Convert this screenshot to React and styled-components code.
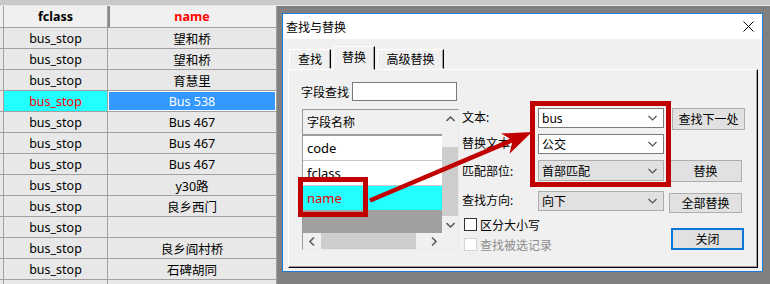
import React from 'react';
import styled, { createGlobalStyle } from 'styled-components';

const GlobalStyle = createGlobalStyle`
  html, body { margin: 0; padding: 0; background: #808080; }
  body {
    font-family: "Noto Sans", "Noto Sans CJK SC", sans-serif;
    font-size: 12px;
    color: #000;
  }
  * { box-sizing: border-box; }
`;

const Screen = styled.div`
  position: relative;
  width: 770px;
  height: 284px;
  overflow: hidden;
  background: #808080;
  display: flex;
  flex-direction: column;
`;

const TopStrip = styled.div`
  flex: none;
  height: 6px;
  background: #c9c9c9;
  border-bottom: 1px solid #e6e6e6;
`;

const Workspace = styled.div`
  flex: 1;
  min-height: 0;
  display: flex;
  align-items: flex-start;
`;

/* attribute table */
const Grid = styled.div`
  flex: none;
  width: 277px;
  display: grid;
  grid-template-columns: 3px 103px 168px;
  grid-template-rows: 21px;
  grid-auto-rows: 20px;
  gap: 1px;
  padding-right: 1px;
  background: #a0a0a0;
  font-size: 12.5px;
`;

const HeadCell = styled.div`
  background: #f0f0f0;
  display: flex;
  align-items: center;
  justify-content: center;
  font-weight: 700;
  color: ${p => (p.$accent ? '#ff0000' : '#000')};
  ${p => p.$pressed && 'box-shadow: inset 2px 0 0 #8a8a8a;'}
`;

const cellBg = { cyan: '#22ffff', blue: '#3399ff' };
const cellFg = { cyan: '#ff0000', blue: '#ffffff' };

const Cell = styled.div`
  background: ${p => cellBg[p.$tone] || '#e8e8e8'};
  color: ${p => cellFg[p.$tone] || '#000'};
  ${p => p.$tone === 'blue' && 'box-shadow: inset 0 0 0 1px #fff;'}
  display: flex;
  align-items: center;
  justify-content: center;
  white-space: nowrap;
`;

/* dialog */
const Dialog = styled.div`
  flex: none;
  margin: 7px 0 0 5px;
  width: 481px;
  height: 259px;
  border: 1px solid #1b7fd6;
  background: #f0f0f0;
  display: flex;
  flex-direction: column;
`;

const TitleBar = styled.div`
  flex: none;
  height: 25px;
  background: #fff;
  display: flex;
  align-items: center;
  justify-content: space-between;
  padding: 0 8px 0 3px;
`;

const Body = styled.div`
  flex: 1;
  display: flex;
  flex-direction: column;
  padding: 7px 4px 3px 5px;
`;

const TabRow = styled.div`
  flex: none;
  height: 23px;
  display: flex;
  align-items: flex-end;
  gap: 2px;
  padding-left: 1px;
  position: relative;
  z-index: 1;
`;

const Tab = styled.div`
  width: ${p => p.$w}px;
  height: ${p => (p.$active ? 24 : 20)}px;
  margin-bottom: ${p => (p.$active ? -1 : 0)}px;
  background: #f0f0f0;
  border: 1px solid;
  border-color: #fff #000 transparent #fff;
  box-shadow: inset -1px 0 0 #a0a0a0;
  display: flex;
  align-items: center;
  justify-content: center;
  padding-bottom: ${p => (p.$active ? 2 : 0)}px;
`;

const Panel = styled.div`
  flex: 1;
  border: 1px solid;
  border-color: #fff #000 #000 #fff;
  box-shadow: inset -1px -1px 0 #a0a0a0;
  padding: 12px 0 0 12px;
  display: flex;
  gap: 3px;
`;

const LeftCol = styled.div`
  width: 158px;
  display: flex;
  flex-direction: column;
`;

const SearchRow = styled.div`
  display: flex;
  align-items: center;
  gap: 3px;
  height: 19px;
`;

const TextBox = styled.div`
  width: 105px;
  height: 19px;
  background: #fff;
  border: 1px solid #7a7a7a;
`;

const ListBox = styled.div`
  margin: 8px 0 0 1px;
  width: 157px;
  height: 141px;
  border: 1px solid;
  border-color: #9a9a9a #e8e8e8 #e8e8e8 #9a9a9a;
  box-shadow: inset 1px 1px 0 #a8a8a8;
  display: grid;
  grid-template-columns: 1fr 16px;
  grid-template-rows: 1fr 16px;
`;

const ListMain = styled.div`
  background: #a0a0a0;
  display: flex;
  flex-direction: column;
  overflow: hidden;
`;

const ListHead = styled.div`
  flex: none;
  height: 26px;
  background: #f0f0f0;
  border-bottom: 2px solid #9c9c9c;
  display: flex;
  align-items: center;
  padding-left: 4px;
`;

const ListRow = styled.div`
  flex: none;
  height: ${p => (p.$picked ? 24 : 25)}px;
  background: ${p => (p.$picked ? '#22ffff' : '#fff')};
  color: ${p => (p.$picked ? '#e80000' : '#000')};
  border-bottom: ${p => (p.$picked ? 'none' : '1px solid #c8c8c8')};
  display: flex;
  align-items: center;
  padding-left: 4px;
  font-size: 13px;
`;

const ScrollBar = styled.div`
  background: #f0f0f0;
  display: flex;
  flex-direction: ${p => (p.$vertical ? 'column' : 'row')};
  align-items: stretch;
`;

const ScrollArrow = styled.div`
  flex: none;
  width: ${p => (p.$vertical ? 'auto' : '17px')};
  height: ${p => (p.$vertical ? '17px' : 'auto')};
  display: flex;
  align-items: center;
  justify-content: center;
`;

const ScrollThumb = styled.div`
  flex: none;
  background: #cdcdcd;
  ${p => (p.$vertical ? `height: ${p.$size}px;` : `width: ${p.$size}px; margin: 0 0 0 1px;`)}
`;

const ScrollSpace = styled.div`
  flex: 1;
`;

const Corner = styled.div`
  background: #f0f0f0;
`;

const RightCol = styled.div`
  display: flex;
  flex-direction: column;
  padding-top: 26px;
`;

const FieldRow = styled.div`
  display: flex;
  align-items: flex-start;
  margin-top: ${p => p.$gap || 0}px;
`;

const FieldLabel = styled.div`
  width: 76px;
  height: 20px;
  line-height: 20px;
  white-space: nowrap;
  padding-top: ${p => p.$nudge || 0}px;
`;

const Combo = styled.div`
  width: 126px;
  height: ${p => p.$h || 20}px;
  border: 1px solid ${p => (p.$plain ? '#adadad' : '#7a7a7a')};
  background: ${p => (p.$plain ? '#e1e1e1' : '#fff')};
  display: flex;
  align-items: center;
  justify-content: space-between;
  padding: 0 6px 0 3px;
`;

const Button = styled.button`
  width: 73px;
  height: ${p => p.$h || 22}px;
  margin: ${p => p.$drop || 0}px 0 0 ${p => p.$shift || 5}px;
  padding: 0;
  border: ${p => (p.$primary ? '2px solid #0a78d7' : '1px solid #adadad')};
  background: #e1e1e1;
  font: inherit;
  font-size: 12px;
  color: #000;
`;

const BottomRow = styled.div`
  margin-top: 5px;
  width: 282px;
  padding-left: 2px;
  display: flex;
  justify-content: space-between;
  align-items: flex-start;
`;

const CheckCol = styled.div`
  display: flex;
  flex-direction: column;
  gap: 7px;
`;

const CheckItem = styled.label`
  display: flex;
  align-items: center;
  gap: 3px;
  height: 13px;
  color: ${p => (p.$disabled ? '#8d8d8d' : '#000')};
  white-space: nowrap;
`;

const CheckBox = styled.span`
  width: 13px;
  height: 13px;
  background: #fff;
  border: 1px solid ${p => (p.$disabled ? '#d4d4d4' : '#333')};
`;

const Overlay = styled.svg`
  position: absolute;
  left: 0;
  top: 0;
  pointer-events: none;
`;

const Chevron = ({ dir = 'down', color = '#555', w = 1.2 }) => {
  const pts = {
    down: '0.5,1 4.5,5 8.5,1',
    up: '0.5,5 4.5,1 8.5,5',
    left: '5,0.5 1,4.5 5,8.5',
    right: '1,0.5 5,4.5 1,8.5',
  }[dir];
  const vertical = dir === 'down' || dir === 'up';
  return (
    <svg width={vertical ? 9 : 6} height={vertical ? 6 : 9} viewBox={vertical ? '0 0 9 6' : '0 0 6 9'}>
      <polyline points={pts} fill="none" stroke={color} strokeWidth={w} />
    </svg>
  );
};

const rows = [
  ['bus_stop', '望和桥'],
  ['bus_stop', '望和桥'],
  ['bus_stop', '育慧里'],
  ['bus_stop', 'Bus 538', true],
  ['bus_stop', 'Bus 467'],
  ['bus_stop', 'Bus 467'],
  ['bus_stop', 'Bus 467'],
  ['bus_stop', 'y30路'],
  ['bus_stop', '良乡西门'],
  ['bus_stop', ''],
  ['bus_stop', '良乡阎村桥'],
  ['bus_stop', '石碑胡同'],
  ['', ''],
];

const red = '#c00000';

const App = () => (
  <Screen>
    <GlobalStyle />
    <TopStrip />
    <Workspace>
      <Grid>
        <HeadCell />
        <HeadCell>fclass</HeadCell>
        <HeadCell $accent $pressed>name</HeadCell>
        {rows.map(([cls, name, sel], i) => (
          <React.Fragment key={i}>
            <Cell />
            <Cell $tone={sel ? 'cyan' : undefined}>{cls}</Cell>
            <Cell $tone={sel ? 'blue' : undefined}>{name}</Cell>
          </React.Fragment>
        ))}
      </Grid>

      <Dialog>
        <TitleBar>
          <span>查找与替换</span>
          <svg width="11" height="11" viewBox="0 0 11 11">
            <path d="M0.5 0.5 L10.5 10.5 M10.5 0.5 L0.5 10.5" stroke="#000" strokeWidth="1" />
          </svg>
        </TitleBar>
        <Body>
          <TabRow>
            <Tab $w={42}>查找</Tab>
            <Tab $w={42} $active>替换</Tab>
            <Tab $w={67}>高级替换</Tab>
          </TabRow>
          <Panel>
            <LeftCol>
              <SearchRow>
                <span>字段查找</span>
                <TextBox />
              </SearchRow>
              <ListBox>
                <ListMain>
                  <ListHead>字段名称</ListHead>
                  <ListRow>code</ListRow>
                  <ListRow>fclass</ListRow>
                  <ListRow $picked>name</ListRow>
                </ListMain>
                <ScrollBar $vertical>
                  <ScrollArrow $vertical><Chevron dir="up" color="#606060" w={1.6} /></ScrollArrow>
                  <ScrollSpace />
                  <ScrollThumb $vertical $size={69} />
                  <ScrollArrow $vertical><Chevron dir="down" color="#606060" w={1.6} /></ScrollArrow>
                </ScrollBar>
                <ScrollBar>
                  <ScrollArrow><Chevron dir="left" color="#606060" w={1.6} /></ScrollArrow>
                  <ScrollThumb $size={95} />
                  <ScrollSpace />
                  <ScrollArrow><Chevron dir="right" color="#606060" w={1.6} /></ScrollArrow>
                </ScrollBar>
                <Corner />
              </ListBox>
            </LeftCol>

            <RightCol>
              <FieldRow>
                <FieldLabel>文本:</FieldLabel>
                <Combo>
                  <span>bus</span>
                  <Chevron />
                </Combo>
                <Button $shift={8}>查找下一处</Button>
              </FieldRow>
              <FieldRow $gap={4}>
                <FieldLabel>替换文本:</FieldLabel>
                <Combo>
                  <span>公交</span>
                  <Chevron />
                </Combo>
              </FieldRow>
              <FieldRow $gap={6}>
                <FieldLabel $nudge={2}>匹配部位:</FieldLabel>
                <Combo $plain $h={21}>
                  <span>首部匹配</span>
                  <Chevron />
                </Combo>
                <Button>替换</Button>
              </FieldRow>
              <FieldRow $gap={9}>
                <FieldLabel>查找方向:</FieldLabel>
                <Combo $plain>
                  <span>向下</span>
                  <Chevron />
                </Combo>
                <Button $drop={2} $h={20}>全部替换</Button>
              </FieldRow>
              <BottomRow>
                <CheckCol>
                  <CheckItem>
                    <CheckBox />
                    区分大小写
                  </CheckItem>
                  <CheckItem $disabled>
                    <CheckBox $disabled />
                    查找被选记录
                  </CheckItem>
                </CheckCol>
                <Button $primary $drop={10}>关闭</Button>
              </BottomRow>
            </RightCol>
          </Panel>
        </Body>
      </Dialog>
    </Workspace>

    <Overlay width="770" height="284" viewBox="0 0 770 284">
      <rect x="300.5" y="179.5" width="65" height="35" fill="none" stroke={red} strokeWidth="5" />
      <rect x="532.5" y="103.5" width="136" height="81" fill="none" stroke={red} strokeWidth="5" />
      <line x1="370" y1="200.5" x2="514" y2="139.5" stroke={red} strokeWidth="4.5" />
      <polygon points="532,132 509.5,153.7 512.7,140.5 501.1,133.5" fill={red} />
    </Overlay>
  </Screen>
);

export default App;
